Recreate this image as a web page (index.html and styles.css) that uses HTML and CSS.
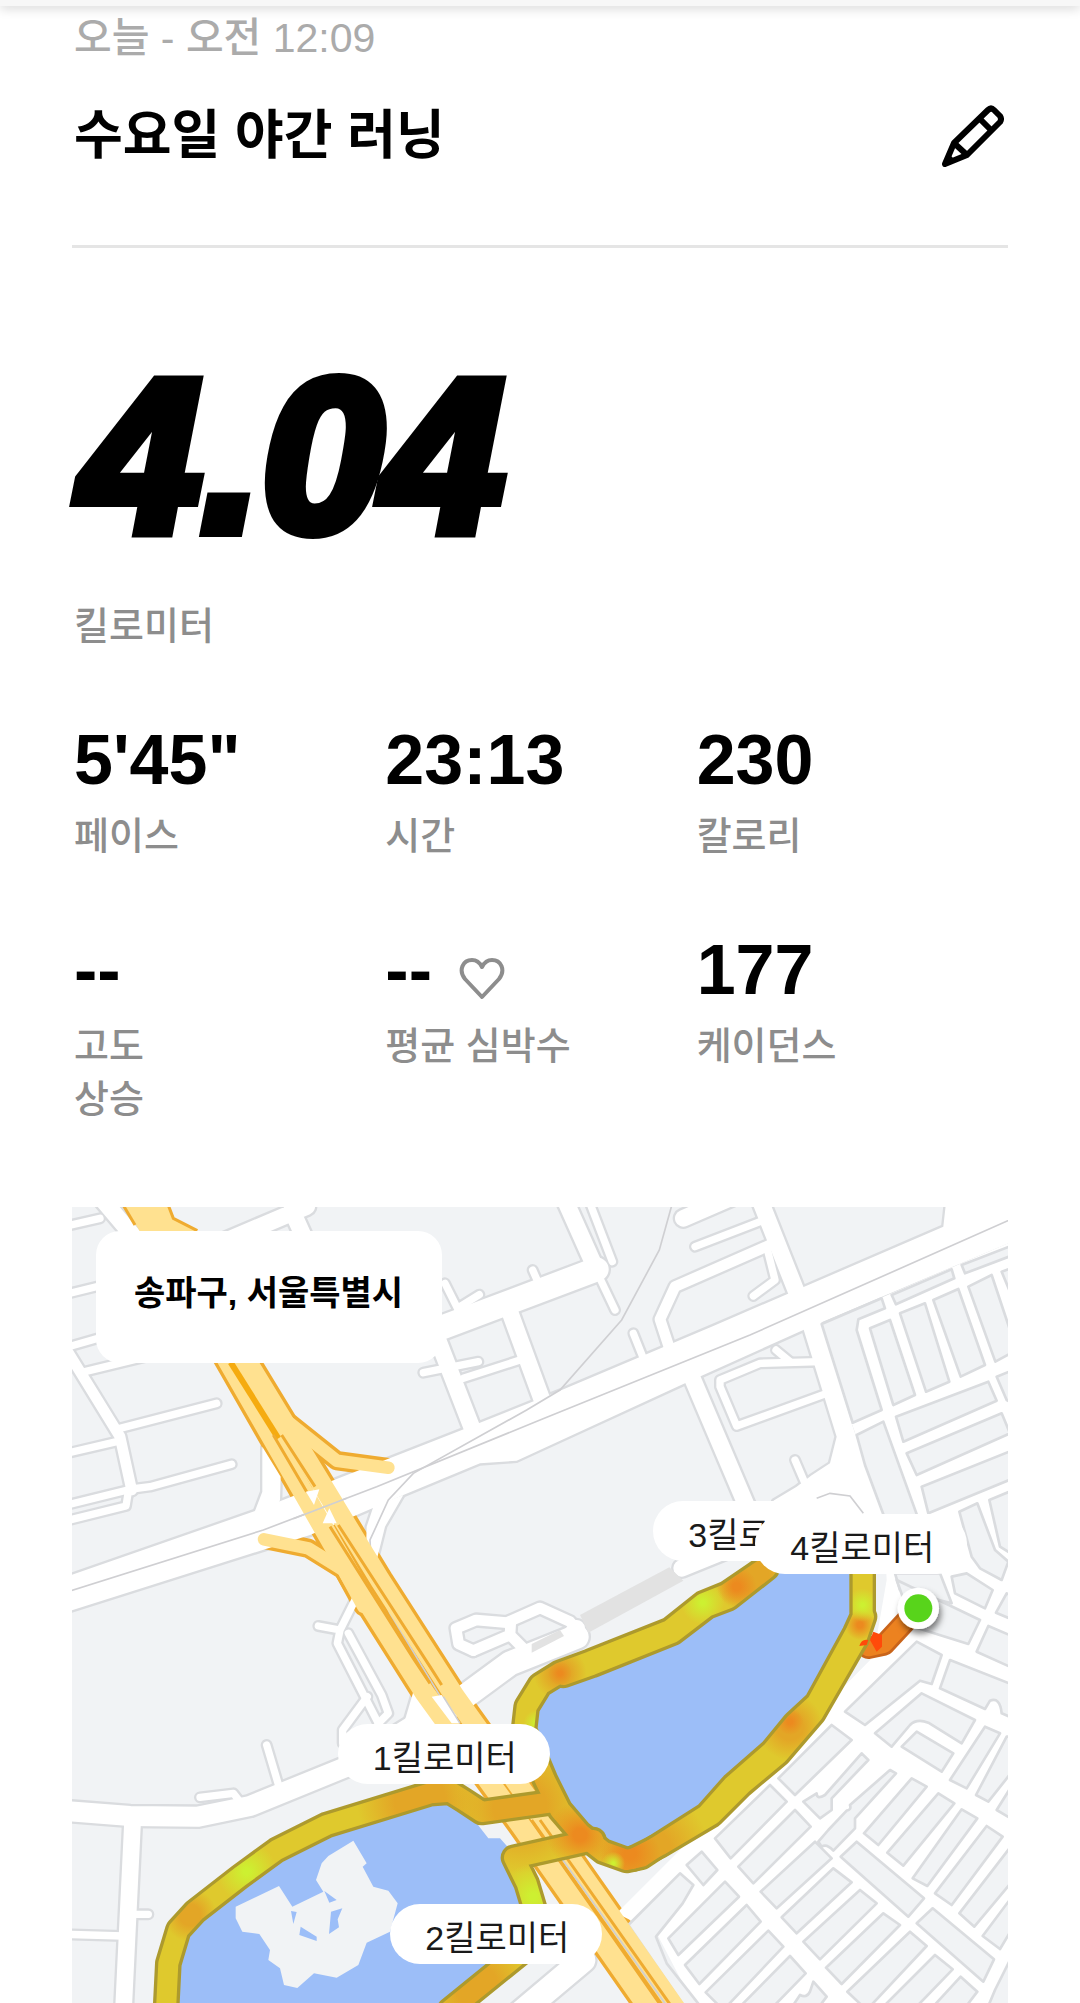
FILE: index.html
```html
<!DOCTYPE html>
<html lang="ko">
<head>
    <meta charset="UTF-8">
    <meta name="viewport" content="width=device-width, initial-scale=1.0">
    <title>수요일 야간 러닝</title>
    <link rel="stylesheet" href="styles.css">
</head>
<body>

<div class="topbar"></div>

<main class="run">
    <header class="run-header">
        <p class="date">오늘 - 오전 12:09</p>
        <div class="title-row">
            <h1>수요일 야간 러닝</h1>
            <button type="button" class="edit-btn" aria-label="이름 수정">
                <svg viewBox="0 0 62 62" fill="none" stroke="#000" stroke-width="6" stroke-linejoin="round">
                    <path d="M3 59L12 38L46 5Q49 2 52 5L58 11Q60 14 58 17L25 50Z"/>
                    <path d="M37 13L50 26M12 38L25 50"/>
                    <path d="M3 59L7 49L13 55Z" fill="#000" stroke="none"/>
                </svg>
            </button>
        </div>
    </header>

    <section class="distance">
        <p class="distance-value">4.04</p>
        <p class="label">킬로미터</p>
    </section>

    <section class="stats">
        <div class="stat">
            <p class="value">5'45"</p>
            <p class="label">페이스</p>
        </div>
        <div class="stat">
            <p class="value">23:13</p>
            <p class="label">시간</p>
        </div>
        <div class="stat">
            <p class="value">230</p>
            <p class="label">칼로리</p>
        </div>
        <div class="stat">
            <p class="value">--</p>
            <p class="label">고도<br>상승</p>
        </div>
        <div class="stat">
            <p class="value">--
                <svg class="heart" viewBox="0 0 46 42" fill="none" stroke="#8d8d8d" stroke-width="4" stroke-linejoin="round">
                    <path d="M23 39L6 21C-1 12 4 2 13 2C18 2 21 5 23 9C25 5 28 2 33 2C42 2 47 12 40 21Z"/>
                </svg>
            </p>
            <p class="label">평균 심박수</p>
        </div>
        <div class="stat">
            <p class="value">177</p>
            <p class="label">케이던스</p>
        </div>
    </section>

    <section class="map">
        <svg class="map-art" viewBox="36 51 2808 2388" aria-hidden="true">
            <defs>
                <!-- streets: drawn twice, once as outline and once as fill -->
                <g id="streets">
                    <g class="w20">
                        <path d="M20 108L120 85"/>
                        <path d="M20 312L130 285"/>
                        <path d="M20 472L130 440"/>
                        <path d="M75 545L260 500"/>
                        <path d="M180 715L470 640"/>
                        <path d="M20 790L170 755"/>
                        <path d="M20 945L215 897L270 890L515 823"/>
                        <path d="M20 992L198 948L205 905"/>
                        <path d="M1155 280L1205 380"/>
                        <path d="M1200 350L1258 314M1418 240L1440 290"/>
                        <path d="M1090 548L1255 515M1210 565L1380 510"/>
                    </g>
                    <g class="w32">
                        <path d="M20 480L180 740L215 900"/>
                    </g>
                    <g class="w50">
                        <path d="M120 20L230 150M480 160L740 50M695 60L740 160"/>
                        <path d="M1130 440L1250 750M1340 340L1450 640"/>
                    </g>
                    <path class="w72" d="M1100 430L1610 238"/>

                    <g transform="translate(1440 0)">
                        <g class="w20">
                            <path d="M150 40L217 215M175 255L225 360"/>
                            <path d="M465 170L660 95"/>
                            <path d="M680 170L705 270L640 318"/>
                            <path d="M280 430L312 510"/>
                            <path d="M708 480L750 515"/>
                            <path d="M765 810L795 880"/>
                            <path d="M840 515L660 520L540 570L540 590L590 708L860 610"/>
                        </g>
                        <g class="w32">
                            <path d="M690 165L405 290L360 388L390 480"/>
                        </g>
                        <g class="w50">
                            <path d="M430 85L580 20"/>
                            <path d="M75 30L160 220M455 560L625 960"/>
                            <path d="M660 30L775 320"/>
                            <path d="M425 1135L560 1080"/>
                        </g>
                        <path class="area" d="M785 400L890 740L870 820L815 856L770 890L700 932L850 1000L1040 1000L980 830L935 700L840 380Z"/>
                    </g>

                    <g transform="translate(0 1170)">
                        <g class="w20">
                            <path d="M20 1063L190 1068M230 1003L265 1003"/>
                            <path d="M420 652L520 640L540 665M620 495L660 630"/>
                            <path d="M775 138L840 150L885 60M840 150L832 190L960 440"/>
                            <path d="M865 160L965 345L985 400L955 430M922 350L848 450V490"/>
                        </g>
                        <path class="w50" d="M218 720L190 1300"/>
                        <path class="w60" d="M20 693L210 708L415 710L570 678L860 560L1070 430"/>
                        <path class="w32" d="M1240 212L1196 192L1188 145L1248 120L1340 128L1440 84L1530 125L1560 160"/>
                        <path class="w32" d="M1352 130L1350 165L1240 212M1350 165L1400 215"/>
                        <path class="w72" d="M1180 375L1350 250L1500 190L1550 170"/>
                        <path class="w50" d="M1520 180L1550 145"/>
                        <path class="w72" d="M1380 1300L1570 1140"/>
                        <path class="area" d="M1060 335L1035 420L1100 450L1200 450Z"/>
                    </g>
                    <path class="area" d="M607 770L607 905L585 963L640 980L660 930L662 860Z"/>
                    <path class="area" d="M940 950L920 1010L918 1080L950 1110L975 1010L1030 915Z"/>
                    <path class="area" d="M0 1167L585 963L1215 716L1500 602L1960 408L2650 110L2660 20L2880 0L2880 145L2230 420L1870 582L1440 780L1370 812L1260 820L1030 915L750 1035L0 1272Z"/>
                </g>

                <g id="highway">
                    <path d="M485 480L880 1170L1095 1510L1385 1910L1770 2460"/>
                    <path d="M540 480L960 1170L1185 1520L1465 1910L1850 2460"/>
                    <path class="ramp" d="M690 700L830 812L985 833"/>
                    <path class="ramp" d="M612 1048L745 1075L850 1140L910 1250"/>
                </g>

                <g id="route">
                    <path d="M318 2460L325 2320L355 2220L405 2165L540 2060L650 1980L800 1905L1110 1810L1170 1805L1210 1830L1265 1866L1480 1836"/>
                    <path d="M1600 1950L1362 2003L1400 2080L1424 2160L1380 2290L1170 2460"/>
                    <path d="M2120 1130L2000 1212L1930 1240L1830 1320L1590 1415L1500 1448L1440 1485L1400 1550L1392 1620L1455 1770L1500 1860L1560 1930L1630 1985L1700 2010L1745 2000L1790 1970L1940 1875L2020 1785L2135 1685L2205 1600L2270 1540L2385 1330L2408 1280L2408 1130"/>
                    <path d="M1720 2006L1800 1966L1955 1874L2045 1784L2155 1692L2260 1570L2390 1345L2412 1280"/>
                    <path d="M2120 1135L2005 1225L1940 1250L1838 1328L1595 1425L1510 1455"/>
                </g>

                <radialGradient id="orange"><stop offset="0.2" stop-color="#ec8a1f"/><stop offset="1" stop-color="#ec8a1f" stop-opacity="0"/></radialGradient>
                <radialGradient id="amber"><stop offset="0.4" stop-color="#e3a626"/><stop offset="1" stop-color="#e3a626" stop-opacity="0"/></radialGradient>
                <radialGradient id="lime"><stop offset="0.1" stop-color="#cdf031"/><stop offset="1" stop-color="#cdf031" stop-opacity="0"/></radialGradient>
                <mask id="route-mask" maskUnits="userSpaceOnUse" x="0" y="0" width="2900" height="2500">
                    <use href="#route" class="route-mask"/>
                </mask>
                <filter id="pin-shadow" x="-50%" y="-50%" width="200%" height="200%">
                    <feDropShadow dx="6" dy="14" stdDeviation="10" flood-opacity="0.5"/>
                </filter>
            </defs>

            <rect class="land" x="0" y="0" width="2900" height="2500"/>

            <use href="#streets" class="street-edge"/>
            <use href="#highway" class="highway-edge"/>
            <use href="#streets" class="street-fill"/>

            <!-- service road beside the lake -->
            <path class="service" d="M1828 1132L1560 1275L1585 1328L1870 1172Z"/>
            <path class="service" d="M1415 1362L1500 1320L1512 1338L1415 1388Z"/>

            <!-- blocks on the east side -->
            <path class="open" d="M2285 400L2844 160V2440H1900L1790 2230L1670 2170L1880 1960L1960 1890L2440 1400L2480 1170L2470 970L2375 700Z"/>
            <g class="blocks" transform="translate(1440 0)">
                <path d="M845 402L1025 325L1035 355L955 388L950 420L1025 660L938 698Z"/>
                <path d="M1055 315L1235 238L1243 265L1068 343ZM1265 225L1420 165V195L1275 250Z"/>
                <path d="M990 415L1050 390L1125 615L1060 645ZM1080 370L1155 340L1228 575L1158 605Z"/>
                <path d="M1180 330L1255 297L1335 525L1262 560ZM1285 290L1355 255L1430 480L1366 515ZM1385 245L1420 232V330Z"/>
                <path d="M1068 680L1345 575L1370 632L1090 755ZM1100 790L1385 670L1410 730L1130 855Z"/>
                <path d="M1145 890L1420 780V865L1165 970ZM1370 560L1420 540V640L1400 630Z"/>
                <path d="M950 735L1030 695L1140 1000H1040L975 825Z"/>
                <path d="M1258 965L1312 940L1365 1080L1405 1115L1385 1170L1320 1135L1295 1100Z"/>
                <path d="M1348 930L1420 900V1095L1380 1070Z"/>
                <path d="M1065 1150H1200L1235 1240L1080 1200Z"/>
            </g>
            <g class="blocks" transform="translate(1440 1170)">
                <path d="M1235 -10L1280 -20L1358 30L1335 85L1245 40ZM1400 40L1420 50V120L1368 98Z"/>
                <path d="M1070 0L1195 60L1320 120L1285 192L1120 140ZM1345 138L1420 170V265L1310 215Z"/>
                <path d="M915 395L1130 185L1205 225L1175 312L1140 302L975 435Z"/>
                <path d="M1230 240L1420 315V415L1385 400Q1380 350 1350 362L1335 387L1200 325Z"/>
                <path d="M1005 460L1145 340L1305 420L1265 490L1165 428Q1130 415 1110 435L1055 500Z"/>
                <path d="M1085 500L1130 455L1240 520L1205 575Z"/>
                <path d="M1335 440L1380 460L1280 625L1230 600ZM1420 470V570L1345 665L1308 645L1400 470ZM1370 690L1420 610V720Z"/>
                <path d="M715 595L875 435L935 480L765 645ZM525 775L690 615L740 665L572 835Z"/>
                <path d="M790 665L830 640Q830 660 855 645L965 520L985 540L875 655L875 690L840 715Z"/>
                <path d="M865 750L920 692Q935 690 930 675L1050 570L1068 580L945 715L945 745L880 812Q860 790 845 800L835 785Z"/>
                <path d="M595 860L765 690L812 740L640 910ZM662 935L825 785L875 835L710 985Z"/>
                <path d="M725 1012L880 865L935 907L770 1060ZM790 1085L960 930L1010 970L840 1138Z"/>
                <path d="M858 1163L1030 1000L1080 1035L905 1212ZM922 1235L1110 1055L1160 1098L980 1290Z"/>
                <path d="M1020 1290L1185 1125L1238 1168L1120 1290ZM1170 1290L1262 1190L1312 1235L1270 1290Z"/>
                <path d="M902 830L950 785L1152 955L1105 1010ZM1130 1030L1178 985L1362 1138L1330 1205Z"/>
                <path d="M972 760L1115 595L1160 620L1015 795ZM1042 818L1195 640L1243 670L1090 857Z"/>
                <path d="M1118 895L1265 688L1312 715L1162 918ZM1185 940L1340 738L1388 770L1235 975Z"/>
                <path d="M1258 1000L1420 790V900L1303 1040ZM1328 1068L1420 945V1040L1380 1107ZM1420 1120V1290H1340L1365 1230Z"/>
                <path d="M440 855L485 815L532 870L490 915Z"/>
                <path d="M265 1035L420 880L460 915L428 970L348 1070L380 1150L490 1290H440Z"/>
                <path d="M385 1075L555 905L597 950L415 1125ZM435 1155L620 975L662 1025L478 1212Z"/>
                <path d="M497 1237L685 1052L730 1100L550 1290ZM600 1280L750 1128L797 1180L690 1290Z"/>
                <path d="M750 1290L780 1245Q800 1255 810 1235L820 1205L860 1250L830 1290Z"/>
            </g>

            <!-- railway -->
            <path class="rail" d="M20 1206L610 1020L950 890L1440 690L2070 435L2860 85"/>
            <path class="rail" d="M1837 40L1798 180L1685 390L1500 600L1400 660L1060 850L985 930L930 1050L935 1150L990 1270L1190 1600"/>
            <path class="rail" d="M2270 925L2310 910L2370 918L2410 970"/>

            <use href="#highway" class="highway-fill"/>
            <path class="highway-fill-area" d="M190 40L240 125H412L340 85L325 40Z"/>
            <path class="highway-line" d="M190 46L225 105M325 46L340 85L412 122"/>
            <path class="highway-line thick" d="M512 517L655 745"/>
            <path class="highway-line" d="M640 735L740 905M665 735L765 890M810 1010L1060 1405L1110 1480M835 1005L1110 1430L1145 1485"/>
            <path class="highway-line" d="M1415 1890L1810 2450M1440 1890L1835 2450"/>
            <path class="gap" d="M738 905L778 898L762 945ZM808 955L830 1000L788 1000ZM1115 1520L1145 1515L1200 1600L1175 1600Z"/>
            <path class="rail" d="M700 986L860 925M1480 1970L1822 2450M1150 1520L1200 1600"/>

            <!-- lakes -->
            <path class="water" d="M318 2460L325 2320L355 2220L405 2165L540 2060L650 1980L800 1905L1110 1810L1170 1805L1250 1900L1285 1945H1320L1360 1990L1400 2080L1424 2160L1380 2290L1170 2460Z"/>
            <path class="water" d="M2120 1130L2000 1212L1830 1320L1590 1415L1500 1448L1440 1485L1400 1550L1392 1620L1455 1770L1560 1930L1630 1985L1745 2000L1940 1875L2135 1685L2270 1540L2385 1330L2408 1280L2408 1130Z"/>
            <g transform="translate(0 1170)">
                <path class="land" d="M527 980L657 918L697 980L790 935L768 900L785 850L805 828L880 782L920 850L908 860L940 920L985 932L1013 970L990 1055L920 1088L895 1155L830 1193L762 1180L712 1224L672 1215L660 1165L625 1140L630 1110L598 1062L547 1055L527 1015Z"/>
                <path class="water" d="M793 933L830 960L808 968ZM693 993L710 996L700 1032ZM722 1040L770 1070V1083L718 1065ZM813 995L847 985L833 1018L837 1042L807 1062Z"/>
            </g>

            <!-- route -->
            <path class="tail-edge" d="M2550 1280L2472 1364L2425 1374"/>
            <path class="tail" d="M2550 1280L2472 1364L2425 1374"/>
            <use href="#route" class="route-edge"/>
            <g mask="url(#route-mask)">
                <rect class="route-base" x="0" y="0" width="2900" height="2500"/>
                <g fill="url(#amber)">
                    <circle cx="1080" cy="1830" r="190"/>
                    <circle cx="1380" cy="1850" r="200"/>
                    <circle cx="390" cy="2175" r="80"/>
                    <circle cx="1250" cy="2390" r="160"/>
                    <circle cx="1500" cy="1450" r="80"/>
                    <circle cx="1760" cy="1990" r="190"/>
                    <circle cx="2190" cy="1610" r="100"/>
                    <circle cx="2080" cy="1160" r="120"/>
                </g>
                <g fill="url(#orange)">
                    <circle cx="1560" cy="1935" r="100"/>
                    <circle cx="1710" cy="1990" r="90"/>
                    <circle cx="2190" cy="1595" r="40"/>
                    <circle cx="2030" cy="1190" r="60"/>
                    <circle cx="2400" cy="1305" r="45"/>
                    <circle cx="1500" cy="1450" r="35"/>
                </g>
                <g fill="url(#lime)">
                    <circle cx="560" cy="2045" r="90"/>
                    <circle cx="1928" cy="1238" r="65"/>
                    <circle cx="1420" cy="2120" r="100"/>
                    <circle cx="1660" cy="2020" r="35"/>
                    <circle cx="2408" cy="1245" r="50"/>
                    <circle cx="1430" cy="1600" r="40"/>
                </g>
            </g>
            <path class="hot" d="M2398 1368Q2405 1345 2425 1350L2420 1365ZM2440 1325L2466 1335V1370L2450 1385L2430 1350Z"/>
            <g filter="url(#pin-shadow)">
                <circle cx="2575" cy="1255" r="62" fill="#fff"/>
            </g>
            <circle cx="2575" cy="1255" r="42" fill="#58d41b"/>
        </svg>

        <p class="place">송파구, 서울특별시</p>
        <span class="km km-3">3킬로미터</span>
        <span class="km km-4">4킬로미터</span>
        <span class="km km-1">1킬로미터</span>
        <span class="km km-2">2킬로미터</span>
    </section>
</main>

</body>
</html>
```
FILE: styles.css
```css
/* Styles */
* {
    box-sizing: border-box;
}

body {
    margin: 0;
    background-color: #fff;
    color: #000;
    font-family: "Liberation Sans", "Noto Sans CJK KR", sans-serif;
}

p, h1 {
    margin: 0;
}

.topbar {
    height: 6px;
    background-color: #f7f7f7;
    box-shadow: 0 1px 12px rgba(0, 0, 0, 0.25);
}

.run {
    padding: 0 72px;
}

/* Header */
.run-header {
    padding: 8px 0 77px;
    border-bottom: 3px solid #e5e5e5;
}

.date {
    padding-left: 2px;
    color: #ababab;
    font-size: 41px;
    font-weight: 500;
    line-height: 48px;
}

.title-row {
    display: flex;
    justify-content: space-between;
    align-items: center;
    margin-top: 42px;
    padding-left: 2px;
}

h1 {
    font-size: 53px;
    line-height: 64px;
    font-weight: bold;
}

.edit-btn {
    width: 62px;
    height: 62px;
    margin-right: 4px;
    padding: 0;
    border: none;
    background: none;
    cursor: pointer;
}

.edit-btn svg {
    display: block;
    width: 100%;
}

/* Distance */
.distance {
    padding: 108px 0 0 2px;
}

.distance-value {
    padding-left: 6px;
    font-size: 218px;
    font-weight: bold;
    font-style: italic;
    line-height: 200px;
    -webkit-text-stroke: 12px #000;
}

.label {
    color: #8d8d8d;
    font-size: 38px;
    font-weight: 500;
    line-height: 53px;
}

.distance .label {
    margin-top: 44px;
}

/* Stats */
.stats {
    display: grid;
    grid-template-columns: repeat(3, 1fr);
    row-gap: 72px;
    margin-top: 72px;
    padding-left: 2px;
}

.value {
    font-size: 70px;
    font-weight: bold;
    line-height: 70px;
}

.stat .label {
    margin-top: 15px;
}

.heart {
    width: 46px;
    height: 42px;
    margin-left: 8px;
    vertical-align: -6px;
}

/* Map */
.map {
    position: relative;
    margin-top: 81px;
    overflow: hidden;
}

.map-art {
    display: block;
    width: 100%;
}

.place {
    position: absolute;
    left: 24px;
    top: 24px;
    padding: 36px 39px 44px 38px;
    border-radius: 24px;
    background-color: #fff;
    font-size: 34px;
    font-weight: bold;
    line-height: 52px;
}

.km {
    position: absolute;
    padding: 8px 33px 0 35px;
    border-radius: 30px;
    background-color: #fff;
    color: #1a1a1a;
    font-size: 34px;
    line-height: 52px;
}

.km-1 {
    left: 28.4%;
    top: 65%;
}

.km-2 {
    left: 34%;
    top: 87.6%;
}

.km-3 {
    left: 62.1%;
    top: 36.9%;
}

.km-4 {
    left: 73%;
    top: 38.6%;
}

/* Map drawing */
.land {
    fill: #f1f3f5;
}

.water {
    fill: #9cbef8;
}

.open {
    fill: #fff;
}

.blocks {
    fill: #f1f3f5;
    stroke: #dadcdf;
    stroke-width: 8;
    stroke-linejoin: round;
}

.service {
    fill: #e2e2e2;
}

.street-edge, .street-fill {
    fill: #fff;
    stroke-linecap: round;
    stroke-linejoin: round;
}

.street-edge {
    --edge: 14px;
    stroke: #dadcdf;
}

.street-fill {
    --edge: 0px;
    stroke: #fff;
}

.w20, .w32, .w50, .w60, .w72 {
    fill: none;
}

.w20 {
    stroke-width: calc(22px + var(--edge));
}

.w32 {
    stroke-width: calc(32px + var(--edge));
}

.w50 {
    stroke-width: calc(50px + var(--edge));
}

.w60 {
    stroke-width: calc(60px + var(--edge));
}

.w72 {
    stroke-width: calc(72px + var(--edge));
}

.area {
    stroke-width: var(--edge);
}

.highway-edge, .highway-fill {
    fill: none;
    stroke-linecap: round;
    stroke-linejoin: round;
}

.highway-edge {
    --edge: 20px;
    stroke: #efab30;
    stroke-width: 80px;
}

.highway-fill {
    --edge: 0px;
    stroke: #ffe190;
    stroke-width: 60px;
}

.ramp {
    stroke-width: calc(38px + var(--edge));
}

.highway-fill-area {
    fill: #ffe190;
}

.highway-line {
    fill: none;
    stroke: #efab30;
    stroke-width: 9;
}

.thick {
    stroke: #f5ab10;
    stroke-width: 18;
}

.gap {
    fill: #fff;
}

.rail {
    fill: none;
    stroke: #cfcfd2;
    stroke-width: 5;
}

.route-edge, .route-mask {
    fill: none;
    stroke-linecap: round;
    stroke-linejoin: round;
}

.route-edge {
    stroke: #ad9a2d;
    stroke-width: 80;
}

.route-mask {
    stroke: #fff;
    stroke-width: 60;
}

.route-base {
    fill: #dfc92d;
}

.tail-edge, .tail {
    fill: none;
    stroke: #c9641a;
    stroke-width: 66;
    stroke-linejoin: round;
    stroke-linecap: round;
}

.tail {
    stroke: #ec8220;
    stroke-width: 50;
}

.hot {
    fill: #ff4a0a;
}
```
